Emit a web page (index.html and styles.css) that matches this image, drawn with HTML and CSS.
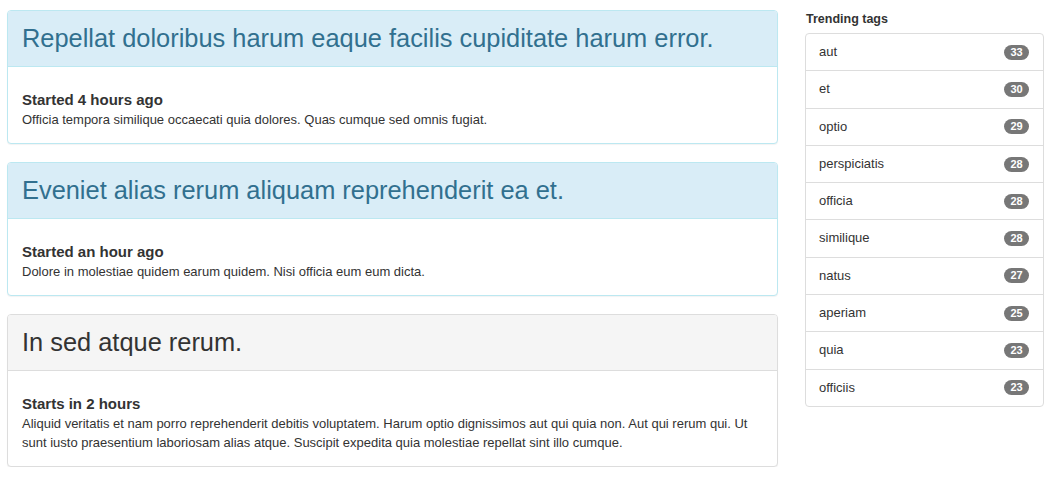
FILE: index.html
```html
<!DOCTYPE html>
<html>
<head>
<meta charset="utf-8">
<link rel="stylesheet" href="styles.css">
</head>
<body>
<div class="layout">
  <main class="feed">
    <section class="panel panel-info">
      <div class="panel-heading"><h2 class="panel-title">Repellat doloribus harum eaque facilis cupiditate harum error.</h2></div>
      <div class="panel-body">
        <h4 class="when">Started 4 hours ago</h4>
        <p class="desc">Officia tempora similique occaecati quia dolores. Quas cumque sed omnis fugiat.</p>
      </div>
    </section>
    <section class="panel panel-info">
      <div class="panel-heading"><h2 class="panel-title">Eveniet alias rerum aliquam reprehenderit ea et.</h2></div>
      <div class="panel-body">
        <h4 class="when">Started an hour ago</h4>
        <p class="desc">Dolore in molestiae quidem earum quidem. Nisi officia eum eum dicta.</p>
      </div>
    </section>
    <section class="panel panel-default">
      <div class="panel-heading"><h2 class="panel-title">In sed atque rerum.</h2></div>
      <div class="panel-body">
        <h4 class="when">Starts in 2 hours</h4>
        <p class="desc">Aliquid veritatis et nam porro reprehenderit debitis voluptatem. Harum optio dignissimos aut qui quia non. Aut qui rerum qui. Ut sunt iusto praesentium laboriosam alias atque. Suscipit expedita quia molestiae repellat sint illo cumque.</p>
      </div>
    </section>
  </main>
  <aside class="sidebar">
    <h5 class="side-title">Trending tags</h5>
    <ul class="list-group">
      <li class="list-item"><span>aut</span><span class="badge">33</span></li>
      <li class="list-item"><span>et</span><span class="badge">30</span></li>
      <li class="list-item"><span>optio</span><span class="badge">29</span></li>
      <li class="list-item"><span>perspiciatis</span><span class="badge">28</span></li>
      <li class="list-item"><span>officia</span><span class="badge">28</span></li>
      <li class="list-item"><span>similique</span><span class="badge">28</span></li>
      <li class="list-item"><span>natus</span><span class="badge">27</span></li>
      <li class="list-item"><span>aperiam</span><span class="badge">25</span></li>
      <li class="list-item"><span>quia</span><span class="badge">23</span></li>
      <li class="list-item"><span>officiis</span><span class="badge">23</span></li>
    </ul>
  </aside>
</div>
</body>
</html>
```

FILE: styles.css
```css
* { box-sizing: border-box; }
html, body { margin: 0; padding: 0; background: #fff; }
body {
  font-family: "Liberation Sans", Arial, Helvetica, sans-serif;
  font-size: 13px;
  line-height: 18px;
  color: #333;
}
.layout {
  display: grid;
  grid-template-columns: 771px 239px;
  column-gap: 27px;
  padding: 10px 0 0 7px;
}
.feed { display: flex; flex-direction: column; gap: 18px; }
.panel {
  border: 1px solid #ddd;
  border-radius: 4px;
  background: #fff;
  box-shadow: 0 1px 1px rgba(0,0,0,.05);
}
.panel-heading {
  padding: 10px 14px;
  border-bottom: 1px solid #ddd;
  border-radius: 3px 3px 0 0;
  background: #f5f5f5;
  color: #333;
}
.panel-info { border-color: #bce8f1; }
.panel-info .panel-heading {
  background: #d9edf7;
  border-bottom-color: #bce8f1;
  color: #31708f;
}
.panel-title {
  margin: 0;
  font-size: 25.4px;
  font-weight: normal;
  line-height: 35px;
}
.panel-body { padding: 24px 14px 13.5px; }
.when {
  margin: 0 0 2px;
  font-size: 15px;
  font-weight: bold;
  line-height: 18px;
}
.desc { margin: 0; line-height: 18.5px; }
.sidebar { padding-top: 2px; }
.side-title {
  margin: 0 0 6px 1px;
  font-size: 12.5px;
  font-weight: bold;
  line-height: 15px;
}
.list-group {
  list-style: none;
  margin: 0;
  padding: 0;
  border: 1px solid #ddd;
  border-radius: 4px;
}
.list-item {
  display: flex;
  justify-content: space-between;
  align-items: center;
  padding: 10px 14px 10px 13px;
  line-height: 16.3px;
  border-top: 1px solid #ddd;
}
.list-item:first-child { border-top: 0; }
.badge {
  display: inline-block;
  min-width: 25px;
  padding: 2px 6px;
  border-radius: 8px;
  background: #777;
  color: #fff;
  font-size: 11px;
  font-weight: bold;
  line-height: 11px;
  text-align: center;
}
```
